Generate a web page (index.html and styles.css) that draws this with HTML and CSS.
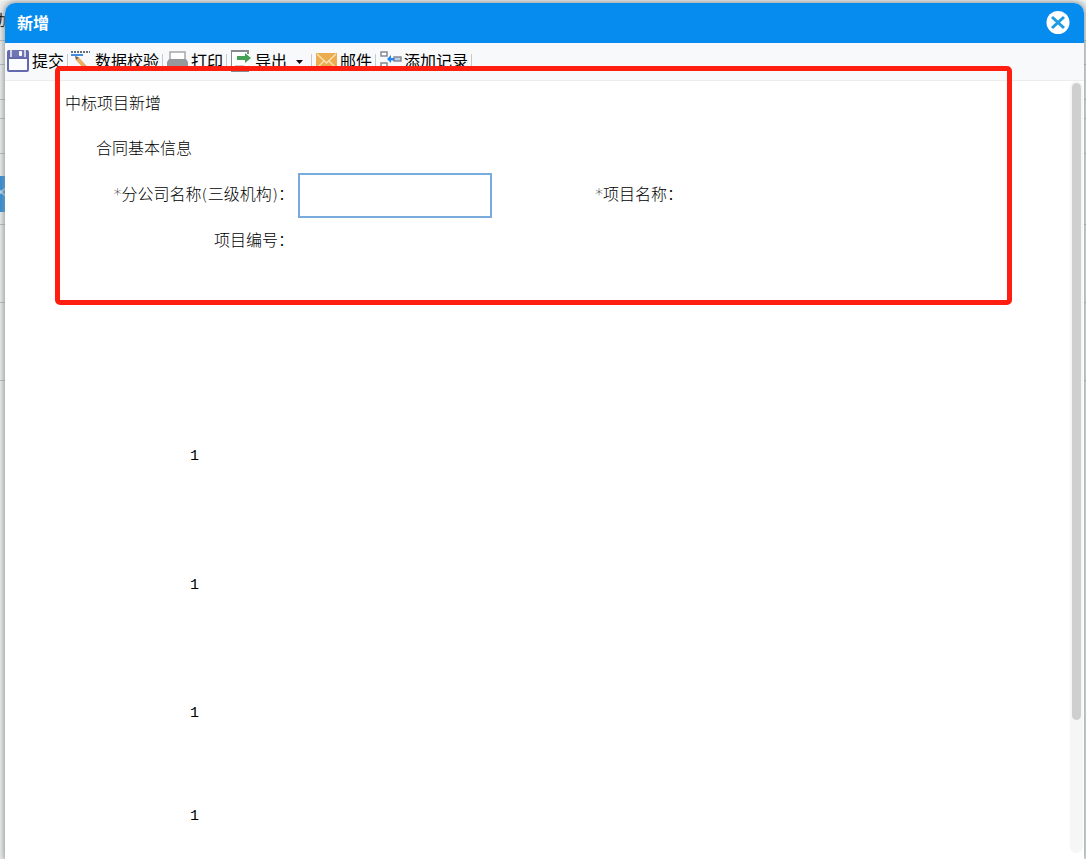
FILE: index.html
```html
<!DOCTYPE html>
<html lang="zh-CN">
<head>
<meta charset="utf-8">
<title>新增</title>
<link rel="stylesheet" href="styles.css">
</head>
<body>
<div class="backdrop">
  <div class="back-row row-head"><span class="back-text">动</span></div>
  <div class="back-row row-tool"></div>
  <div class="back-row row-filter"></div>
  <div class="back-row row-gap"></div>
  <div class="back-row row-filter"></div>
  <div class="back-row row-gap-large"></div>
  <div class="back-row row-tab"><span>×</span></div>
  <div class="back-row row-small"></div>
  <div class="back-row row-big"></div>
  <div class="back-row row-big"></div>
</div>
<section class="window">
  <header class="window-head">
    <h1 class="window-title">新增</h1>
    <button class="close" type="button" aria-label="关闭">
      <svg width="24" height="24" viewBox="0 0 24 24"><circle cx="12" cy="11.500" r="11.500" fill="#fff"/><path d="M6 6l12 11M18 6L6 17" stroke="#1b9ce3" stroke-width="3"/></svg>
    </button>
  </header>
  <nav class="toolbar">
    <button class="tool" type="button">
      <svg width="22" height="22" viewBox="0 0 22 22"><path d="M2 0h18q2 0 2 2v18q0 2-2 2H2q-2 0-2-2V2q0-2 2-2z" fill="#636aae"/><path d="M3 0h2v7H3zM17 0h2v7h-2z" fill="#fff" opacity=".7"/><path d="M5 0h12v7H5z" fill="#7076b4"/><path d="M2 9h18v11H2z" fill="#fbfcff"/><rect x="12" y="1" width="3" height="5" rx="1" fill="#fff"/></svg>
      <span>提交</span>
    </button>
    <button class="tool" type="button">
      <svg width="22" height="22" viewBox="0 0 22 22"><path d="M0 2h19" stroke="#66707e" stroke-width="2" stroke-dasharray="2 1"/><path d="M0 5h12" stroke="#438de0" stroke-width="2"/><path d="M4 6l4 1.500 10 11-3 3L5 10z" fill="#ecae61"/><path d="M4 6l4 1.500L5 10z" fill="#6d6b70"/></svg>
      <span>数据校验</span>
    </button>
    <button class="tool" type="button">
      <svg width="22" height="22" viewBox="0 0 22 22"><path d="M3 10V2h15v8" fill="#fff" stroke="#a4a7aa" stroke-width="1.500"/><path d="M2 9h17l2 3v9H0v-9z" fill="#95999c"/><path d="M4 17h14v4H4z" fill="#f4f4f4"/></svg>
      <span>打印</span>
    </button>
    <button class="tool" type="button">
      <svg width="22" height="22" viewBox="0 0 22 22"><path d="M17 4V1H0v20h17v-5" fill="#fff" stroke="#858a91" stroke-width="2"/><path d="M6 6h8V3l6 5-6 5v-3H6z" fill="#45a057"/><path d="M4 16h9" stroke="#999" stroke-width="1"/></svg>
      <span>导出</span>
      <svg class="arrow" width="8" height="5" viewBox="0 0 8 5"><path d="M0 0h7L3.500 4z" fill="#190812"/></svg>
    </button>
    <button class="tool" type="button">
      <svg width="22" height="22" viewBox="0 0 22 22"><path d="M0 3h21v16H0z" fill="#ebad50"/><path d="M1 4l9.500 9L20 4M1 18l7-7M20 18l-7-7" fill="none" stroke="#fbe4b7" stroke-width="1.300"/></svg>
      <span>邮件</span>
    </button>
    <button class="tool" type="button">
      <svg width="22" height="22" viewBox="0 0 22 22"><path d="M1 2h6v4H1zM1 13h6v4H1z" fill="#fff" stroke="#858a90" stroke-width="1.500"/><path d="M14 7h7v4h-7z" fill="#b9ceef" stroke="#858a90" stroke-width="1.500"/><path d="M7 9l4-4v3h3v2.500h-3V13z" fill="#2385ed"/></svg>
      <span>添加记录</span>
    </button>
  </nav>
  <main class="content">
    <form class="sheet">
      <h2 class="sheet-title">中标项目新增</h2>
      <h3 class="sheet-section">合同基本信息</h3>
      <div class="fields">
        <label for="branch">*分公司名称(三级机构)：</label>
        <input class="cell" id="branch" type="text">
        <span class="label">*项目名称：</span>
      </div>
      <div class="fields">
        <span class="label">项目编号：</span>
      </div>
      <div class="records">
        <div class="record">1</div>
        <div class="record">1</div>
        <div class="record">1</div>
        <div class="record">1</div>
      </div>
    </form>
    <div class="scroll-track"><div class="scroll-thumb"></div></div>
  </main>
</section>
<div class="highlight"></div>
</body>
</html>
```
FILE: styles.css
```css
* { box-sizing: border-box; }
html, body { height: 100%; }
body {
  margin: 0;
  overflow: hidden;
  position: relative;
  background: #dfe2e2;
  color: #000;
  font: 16px/22px "DejaVu Sans", "Noto Sans CJK SC", sans-serif;
}
h1, h2, h3 { margin: 0; font-size: 16px; }
button { border: 0; background: none; font: inherit; color: inherit; padding: 0; }

.backdrop { height: 100%; overflow: hidden; background: #eceeee; border-top: 1px solid #f4f4f4; }
.back-row { border-bottom: 1px solid #b7bcbc; overflow: hidden; }
.row-head { height: 40px; padding-top: 9px; }
.back-text { display: flex; justify-content: flex-end; width: 6px; white-space: nowrap; }
.row-tool { height: 24px; }
.row-filter { height: 35px; }
.row-gap { height: 19px; }
.row-gap-large { height: 22px; border-bottom: 0; }
.row-tab { width: 6px; height: 36px; border: 0; background: #2a8ddd; color: #bcd9f2; padding-top: 5px; }
.row-tab span { display: flex; justify-content: flex-end; width: 8px; }
.row-small { height: 13px; }
.row-big { height: 78px; }

.window {
  position: absolute;
  top: 3px;
  right: 2px;
  bottom: 0;
  left: 5px;
  display: flex;
  flex-direction: column;
  overflow: hidden;
  background: #fff;
  border-radius: 10px 10px 0 0;
  box-shadow: 0 0 6px 1px #8a9292;
}
.window-head {
  display: flex;
  align-items: center;
  justify-content: space-between;
  height: 40px;
  padding: 0 14px 0 12px;
  background: #068bee;
  color: #fff;
}
.window-title { padding-top: 2px; font-weight: 700; }
.close { display: flex; }

.toolbar {
  display: flex;
  height: 38px;
  padding-top: 6px;
  background: #f8f9fb;
  border-bottom: 1px solid #ededee;
}
.tool {
  display: flex;
  align-items: center;
  gap: 2px;
  height: 24px;
  padding: 0 4px 0 3px;
  position: relative;
}
.tool:first-child { gap: 3px; padding-left: 2px; }
.tool::after {
  content: "";
  position: absolute;
  right: 0;
  width: 1px;
  height: 14px;
  background: #c6c8ca;
}
.tool + .tool { margin-left: 1px; }
.tool:nth-child(2) { margin-left: 0; }
.tool span { padding-top: 2px; white-space: nowrap; }
.arrow { margin: 2px 4px 0 7px; }

.content { display: flex; flex: 1; min-height: 0; }
.sheet { flex: 1; min-width: 0; overflow: hidden; line-height: 46px; }
.sheet-title { padding-left: 60px; font-weight: 300; line-height: 45px; }
.sheet-section { padding-left: 91px; font-weight: 300; }
.fields {
  display: grid;
  grid-template-columns: 289px 194px 187px;
  column-gap: 4px;
  height: 46px;
  font-weight: 300;
}
.fields label, .label { text-align: right; white-space: nowrap; }
.cell {
  width: 100%;
  height: 45px;
  margin-top: 1px;
  border: 2px solid #79acdc;
  background: #fff;
  padding: 0 6px;
  font: inherit;
  outline: 0;
}
.records {
  display: grid;
  grid-template-rows: 129px 128px 103px 46px;
  width: 194px;
  padding-top: 170px;
  font-family: "Liberation Mono", monospace;
  font-size: 15px;
  text-align: right;
}

.scroll-track {
  width: 13px;
  margin: 0 1px 6px 0;
  padding: 2px;
  background: #f6f6f6;
  border-radius: 6px;
}
.scroll-thumb { height: 83%; background: #cfcfcf; border-radius: 5px; }

.highlight {
  position: absolute;
  top: 66px;
  right: 74px;
  left: 55px;
  height: 239px;
  border: 5px solid #ff1e10;
  border-radius: 5px;
  pointer-events: none;
}
```
